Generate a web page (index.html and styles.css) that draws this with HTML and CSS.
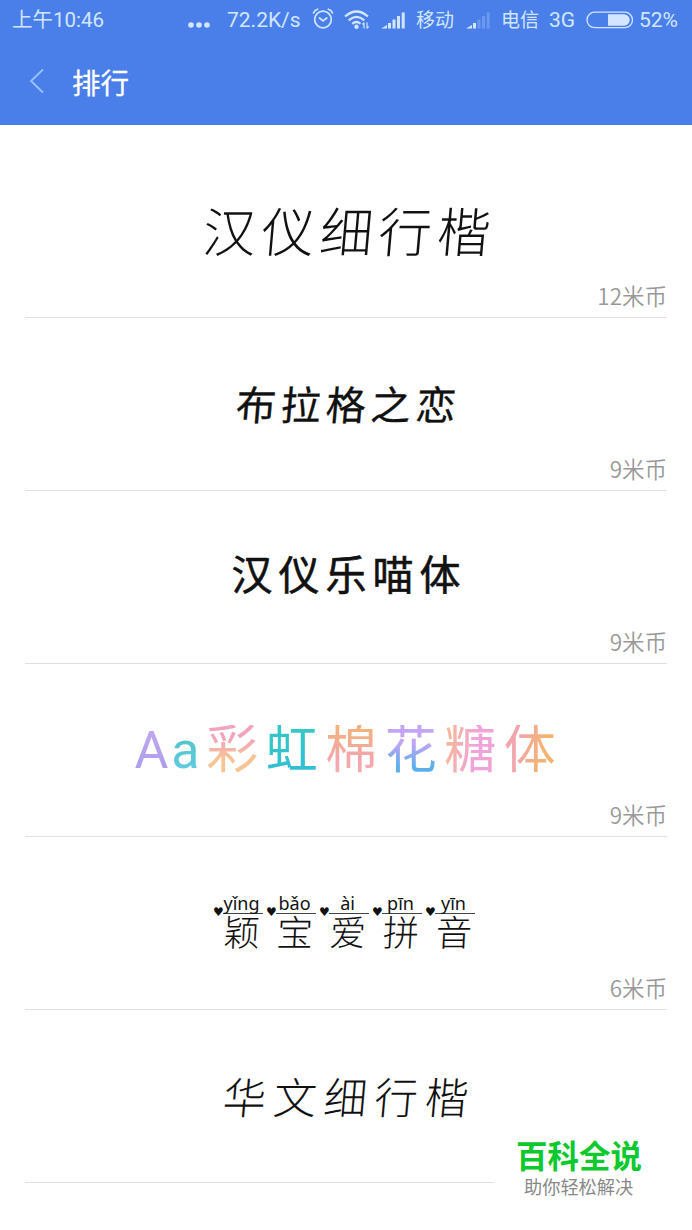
FILE: index.html
```
<!DOCTYPE html>
<html lang="zh-CN">
<head>
  <meta charset="UTF-8">
  <title>排行</title>
  <link rel="stylesheet" href="styles.css">
</head>
<body>

  <header class="header">
    <div class="status">
      <span class="time">上午10:46</span>
      <svg class="dots" width="22" height="6" viewBox="0 0 22 6"><circle cx="3" cy="3" r="2.8"/><circle cx="11" cy="3" r="2.8"/><circle cx="19" cy="3" r="2.8"/></svg>
      <span class="speed">72.2K/s</span>
      <svg class="alarm" width="22" height="22" viewBox="0 0 22 22" fill="none" stroke="#d3e6ff" stroke-width="1.7" stroke-linecap="round">
        <circle cx="11" cy="11.500" r="8.3"/>
        <path d="M7.500 10l3.500 3 3.800-3M1.500 5Q2.500 2 5.600 1.200M20.500 5Q19.500 2 16.400 1.200"/>
      </svg>
      <svg class="wifi" width="26" height="20" viewBox="0 0 26 20" fill="none" stroke="#d3e6ff" stroke-width="2.2">
        <path d="M1 6.500Q12.500-3.500 24 6.500M4.700 10.300Q12.500 3.500 20.300 10.300M8.300 13.800Q12.500 10.200 16.500 13.800"/>
        <circle class="fill" cx="12.500" cy="16.800" r="2.200" stroke="none"/>
        <path d="M20 12.500v6M18.500 14.500L20 12.700M23 12.500v6M23 18.300l1.700-2" stroke-width="1.200"/>
      </svg>
      <svg class="signal" width="25" height="17" viewBox="0 0 25 17">
        <path d="M0 16.500L6 13v3.500zM7 11h3v5.500H7zM11.500 7.500h3v9h-3zM16 4h3v12.500h-3zM20.700 0.500h3v16h-3z"/>
      </svg>
      <span class="carrier">移动</span>
      <svg class="signal" width="25" height="17" viewBox="0 0 25 17">
        <path d="M0 16.500L6 13v3.500zM7 11h3v5.500H7z"/>
        <path class="dim" d="M11.500 7.500h3v9h-3zM16 4h3v12.500h-3zM20.700 0.500h3v16h-3z"/>
      </svg>
      <span class="carrier">电信</span>
      <span class="net">3G</span>
      <svg class="battery" width="48" height="18" viewBox="0 0 48 18">
        <rect x="1" y="1.200" width="45.500" height="15.500" rx="7.700" fill="none" stroke="#d3e6ff" stroke-width="1.300"/>
        <path d="M22 3.300h16a5.700 5.700 0 0 1 0 11.400H22z"/>
      </svg>
      <span class="percent">52%</span>
    </div>
    <div class="nav">
      <svg class="back" width="16" height="26" viewBox="0 0 16 26"><path d="M14 1.500L2 13l12 11.500" fill="none" stroke="#9cc3fa" stroke-width="1.800"/></svg>
      <h1 class="title">排行</h1>
    </div>
  </header>

  <main class="list">
    <div class="item">
      <div class="name xingkai">汉仪细行楷</div>
      <div class="price">12米币</div>
    </div>
    <div class="item">
      <div class="name prague">布拉格之恋</div>
      <div class="price">9米币</div>
    </div>
    <div class="item">
      <div class="name meow">汉仪乐喵体</div>
      <div class="price">9米币</div>
    </div>
    <div class="item">
      <div class="name candy"><span class="c-a">A</span><span class="c-b">a</span><span class="c1">彩</span><span class="c2">虹</span><span class="c3">棉</span><span class="c4">花</span><span class="c5">糖</span><span class="c6">体</span></div>
      <div class="price">9米币</div>
    </div>
    <div class="item">
      <div class="name pinyin">
        <div class="syllable"><span class="heart">♥</span><span class="py">yǐng</span><span class="hz">颖</span></div>
        <div class="syllable"><span class="heart">♥</span><span class="py">bǎo</span><span class="hz">宝</span></div>
        <div class="syllable"><span class="heart">♥</span><span class="py">ài</span><span class="hz">爱</span></div>
        <div class="syllable"><span class="heart">♥</span><span class="py">pīn</span><span class="hz">拼</span></div>
        <div class="syllable"><span class="heart">♥</span><span class="py">yīn</span><span class="hz">音</span></div>
      </div>
      <div class="price">6米币</div>
    </div>
    <div class="item">
      <div class="name huawen">华文细行楷</div>
    </div>
  </main>

  <div class="badge">
    <div class="brand">百科全说</div>
    <div class="slogan">助你轻松解决</div>
  </div>

</body>
</html>
```
FILE: styles.css
```
body {
  margin: 0;
  height: 1230px;
  overflow: hidden;
  position: relative;
  background-color: #fff;
  font-family: Roboto, "Noto Sans CJK SC", sans-serif;
}

.header {
  height: 125px;
  background-color: #4a7fea;
  color: #d3e6ff;
}

.status {
  display: flex;
  align-items: center;
  height: 40px;
  padding-left: 12px;
  font-size: 20px;
  line-height: 40px;
  white-space: nowrap;
}

.status svg {
  flex: none;
  fill: #d3e6ff;
}

.status .alarm {
  fill: none;
  margin: 0 10px 2px 0;
}

.status .wifi {
  fill: none;
  margin-right: 11px;
}

.status .wifi .fill {
  fill: #d3e6ff;
}

.time {
  width: 176px;
  font-size: 20.5px;
}

.dots {
  margin: 10px 17px 0 0;
}

.speed {
  width: 85px;
  font-size: 21px;
}

.signal {
  margin-right: 10px;
}

.status .signal .dim {
  fill: #6b98f0;
}

.carrier {
  width: 50px;
  font-size: 19px;
  padding-top: 2px;
}

.carrier + .net {
  width: 37px;
  margin-left: -2px;
  font-size: 21px;
}

.battery {
  margin-right: 5px;
}

.percent {
  font-size: 21px;
}

.nav {
  display: flex;
  align-items: center;
  height: 85px;
  padding: 0 29px;
}

.back {
  margin-bottom: 3px;
}

.title {
  margin: 0 0 2px 27px;
  font-size: 28.5px;
  font-weight: 400;
  -webkit-text-stroke: 0.3px #fff;
  color: #fff;
}

.list {
  padding: 20px 25px 0;
}

.item {
  display: grid;
  height: 172px;
  border-bottom: 1px solid #e0e0e0;
}

.name,
.price {
  grid-area: 1 / 1;
}

.name {
  place-self: center;
  white-space: nowrap;
  line-height: 1;
  color: #111;
}

.price {
  place-self: end;
  margin: 0 0 6px;
  font-family: "Noto Sans CJK SC", sans-serif;
  font-size: 22.5px;
  font-weight: 350;
  line-height: 32px;
  color: #999;
}

.xingkai {
  font-size: 53px;
  font-weight: 300;
  letter-spacing: 5.5px;
  margin: 6px 0 0 7px;
  transform: skewX(-5deg);
}

.prague {
  font-size: 40px;
  font-weight: 400;
  -webkit-text-stroke: 0.3px #111;
  letter-spacing: 5px;
  margin: 5px 0 0 5px;
  transform: skewX(-5deg);
}

.meow {
  font-size: 41px;
  font-weight: 400;
  -webkit-text-stroke: 0.6px #111;
  letter-spacing: 6px;
  margin: 0 0 1px 6px;
}

.candy {
  display: flex;
  align-items: center;
  font-size: 52px;
  margin: 2px 0 0 2px;
}

.candy span {
  width: 59.5px;
  text-align: center;
  color: transparent;
  background-clip: text;
}

.candy .c-a {
  width: 34px;
  background-image: linear-gradient(#c2a6f2, #a99cec);
}

.candy .c-b {
  width: 34px;
  background-image: linear-gradient(#4cc4bd, #65cbe8);
}

.candy .c1 {
  background-image: linear-gradient(#f2a3bd 25%, #f8c493 65%);
}

.candy .c2 {
  background-image: linear-gradient(#35c9c3, #31bcd8);
}

.candy .c3 {
  background-image: linear-gradient(#f2b476, #f5a5a9 60%, #f2b0b7);
}

.candy .c4 {
  background-image: linear-gradient(#c3a4f5 35%, #5bb0ec 80%);
}

.candy .c5 {
  background-image: linear-gradient(100deg, #f6bd86, #f0a3dc 60%, #f0a3cf);
}

.candy .c6 {
  background-image: linear-gradient(100deg, #f3a5ad 30%, #f4b46f 70%);
}

.pinyin {
  display: flex;
  gap: 3px;
  margin-right: 4px;
}

.syllable {
  display: grid;
  grid-template-columns: 10px 40px;
  grid-template-rows: 20px 39px;
}

.heart {
  font-family: "DejaVu Sans", sans-serif;
  font-size: 12px;
  line-height: 36px;
}

.py {
  font-family: "Noto Sans", sans-serif;
  font-size: 18px;
  line-height: 18px;
  text-indent: -3px;
  text-align: center;
  border-bottom: 1px solid #444;
}

.hz {
  grid-column: 2;
  padding-left: 1px;
  font-size: 36px;
  font-weight: 300;
  line-height: 40px;
  transform: skewX(-3deg);
}

.huawen {
  font-size: 43px;
  font-weight: 300;
  letter-spacing: 7.5px;
  margin: 6px 0 0 6px;
  transform: skewX(-5deg);
}

.badge {
  position: absolute;
  left: 494px;
  top: 1134px;
  width: 198px;
  height: 80px;
  background-color: #fff;
}

.brand {
  margin: 5px 0 0 22px;
  font-size: 31.5px;
  font-weight: 700;
  line-height: 38px;
  color: #0dc92e;
}

.slogan {
  margin-left: 30px;
  font-size: 18.2px;
  line-height: 21px;
  color: #888;
}
```
